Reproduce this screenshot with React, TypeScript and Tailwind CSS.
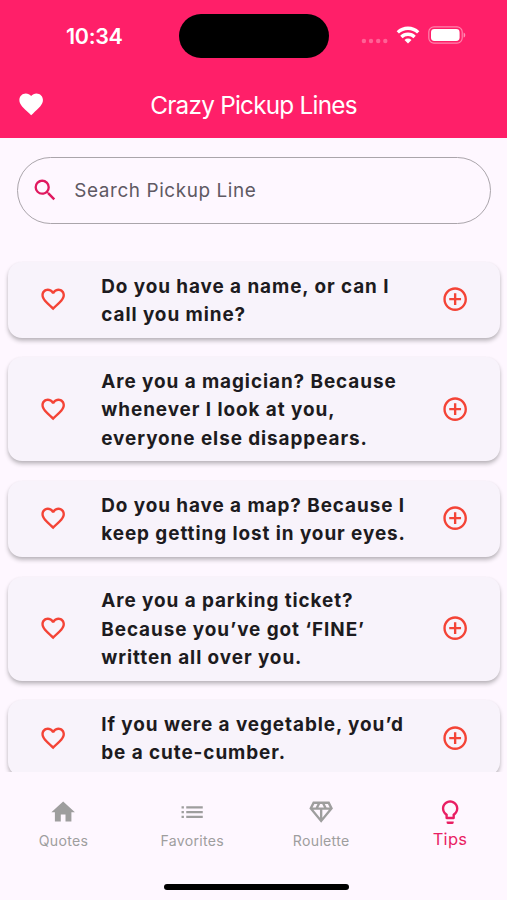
import { useState } from "react";
import {
    MdAddCircleOutline,
    MdFavorite,
    MdFavoriteBorder,
    MdHome,
    MdLightbulbOutline,
    MdList,
    MdOutlineDiamond,
    MdSearch,
} from "react-icons/md";

interface PickupLine {
    id: number;
    rows: string[];
}

const pickupLines: PickupLine[] = [
    { id: 1, rows: ["Do you have a name, or can I", "call you mine?"] },
    { id: 2, rows: ["Are you a magician? Because", "whenever I look at you,", "everyone else disappears."] },
    { id: 3, rows: ["Do you have a map? Because I", "keep getting lost in your eyes."] },
    { id: 4, rows: ["Are you a parking ticket?", "Because you’ve got ‘FINE’", "written all over you."] },
    { id: 5, rows: ["If you were a vegetable, you’d", "be a cute-cumber."] },
];

const tabs = [
    { name: "Quotes", Icon: MdHome },
    { name: "Favorites", Icon: MdList },
    { name: "Roulette", Icon: MdOutlineDiamond },
    { name: "Tips", Icon: MdLightbulbOutline },
];

function StatusBar() {
    return (
        <div className="grid h-[72px] grid-cols-[179px_150px_1fr] text-white">
            <div className="pt-[22px] pl-[66px] text-[21.5px] leading-[28px] font-semibold tracking-[-0.3px]">10:34</div>
            <div className="mt-[14px] h-[44px] rounded-full bg-black"></div>
            <div className="flex items-start pl-[32px]">
                <svg width="27" height="6" viewBox="0 0 27 6" fill="white" fillOpacity="0.3" className="mt-[38px]">
                    <circle cx="2.9" cy="3" r="2.2" />
                    <circle cx="10" cy="3" r="2.2" />
                    <circle cx="17.2" cy="3" r="2.2" />
                    <circle cx="24.3" cy="3" r="2.2" />
                </svg>
                <svg width="24" height="18" viewBox="0 0 24 18" className="mt-[26px] ml-[7.5px]" fill="none" stroke="white" strokeWidth="3.3">
                    <path d="M1.8 6.4a14.6 14.6 0 0 1 20.4 0" />
                    <path d="M5.4 11a9.3 9.3 0 0 1 13.2 0" />
                    <path d="M12 17.6 8.5 14a5 5 0 0 1 7 0z" fill="white" stroke="none" />
                </svg>
                <svg width="38" height="18" viewBox="0 0 38 18" className="mt-[26px] ml-[8px]">
                    <rect x="0.8" y="0.8" width="33.4" height="16.4" rx="5.2" fill="none" stroke="white" strokeOpacity="0.45" strokeWidth="1.2" />
                    <rect x="3" y="3" width="28.6" height="12" rx="3.4" fill="white" />
                    <path d="M35.6 6.4c2.2.8 2.2 4.4 0 5.2z" fill="white" fillOpacity="0.5" />
                </svg>
            </div>
        </div>
    );
}

function LineCard({ line }: { line: PickupLine }) {
    return (
        <div className="flex items-center rounded-[14px] bg-[#f8f3fb] pt-[10.6px] pr-[30.9px] pb-[8.2px] pl-[30.6px] shadow-[0_3px_4px_rgba(0,0,0,0.24),0_1px_3px_rgba(0,0,0,0.06)]">
            <button className="-mt-[3.4px]">
                <MdFavoriteBorder className="size-[28.3px] text-[#f44336]" />
            </button>
            <p className="ml-[34.4px] flex-1 text-[18.9px] leading-[28.4px] font-[650] tracking-[0.93px] whitespace-nowrap text-[#1d1b20]">
                {line.rows.map((row) => (
                    <span key={row} className="block">{row}</span>
                ))}
            </p>
            <button className="-mt-[3.4px]">
                <MdAddCircleOutline className="size-[28.3px] text-[#f44336]" />
            </button>
        </div>
    );
}

export default function App() {
    const [activeTab, setActiveTab] = useState("Tips");

    return (
        <div className="flex h-[900px] w-[507px] flex-col overflow-hidden bg-[#fef7ff] font-['Inter',sans-serif]">
            <header className="h-[137.5px] shrink-0 bg-[#ff1f69]">
                <StatusBar />
                <div className="grid h-[65px] grid-cols-[62px_1fr_62px] items-center text-white">
                    <MdFavorite className="ml-[17px] size-[28.3px]" />
                    <h1 className="text-center text-[24.3px] leading-[32px] font-normal tracking-[-0.75px]">Crazy Pickup Lines</h1>
                </div>
            </header>

            <main className="flex min-h-0 flex-1 flex-col">
                {/* Search */}
                <label className="mr-[16px] ml-[17px] mt-[19px] flex h-[67px] shrink-0 items-center rounded-full border-[1.2px] border-[#aaa5ab] pl-[13px]">
                    <MdSearch className="size-[28.3px] text-[#e0185f]" />
                    <input
                        placeholder="Search Pickup Line"
                        className="ml-[15px] flex-1 bg-transparent pt-[2px] text-[18.9px] tracking-[0.6px] outline-none placeholder:text-[#5f5963]"
                    />
                </label>

                {/* Lines */}
                <div className="mt-[28px] flex min-h-0 flex-1 flex-col gap-[19.8px] overflow-hidden pt-[10.5px] pr-[7px] pl-[8px]">
                    {pickupLines.map((line) => (
                        <LineCard key={line.id} line={line} />
                    ))}
                </div>
            </main>

            <nav className="flex h-[128px] shrink-0 flex-col bg-[#fef7ff]">
                <div className="flex h-[112px] justify-between pt-[26px] pr-[2px] pl-[8.5px]">
                    {tabs.map(({ name, Icon }) => (
                        <button
                            key={name}
                            onClick={() => setActiveTab(name)}
                            className={
                                "flex w-[110px] flex-col items-center " +
                                (activeTab === name ? "text-[#e91e63]" : "text-[#9e9e9e]")
                            }
                        >
                            <Icon className="size-[28.3px]" />
                            <span
                                className={
                                    activeTab === name
                                        ? "text-[16.5px] leading-[26px] tracking-[0.3px]"
                                        : "text-[14.1px] leading-[30px] tracking-[0.3px]"
                                }
                            >
                                {name}
                            </span>
                        </button>
                    ))}
                </div>
                <div className="mx-auto h-[6px] w-[185px] shrink-0 translate-x-[3px] rounded-full bg-black"></div>
            </nav>
        </div>
    );
}
